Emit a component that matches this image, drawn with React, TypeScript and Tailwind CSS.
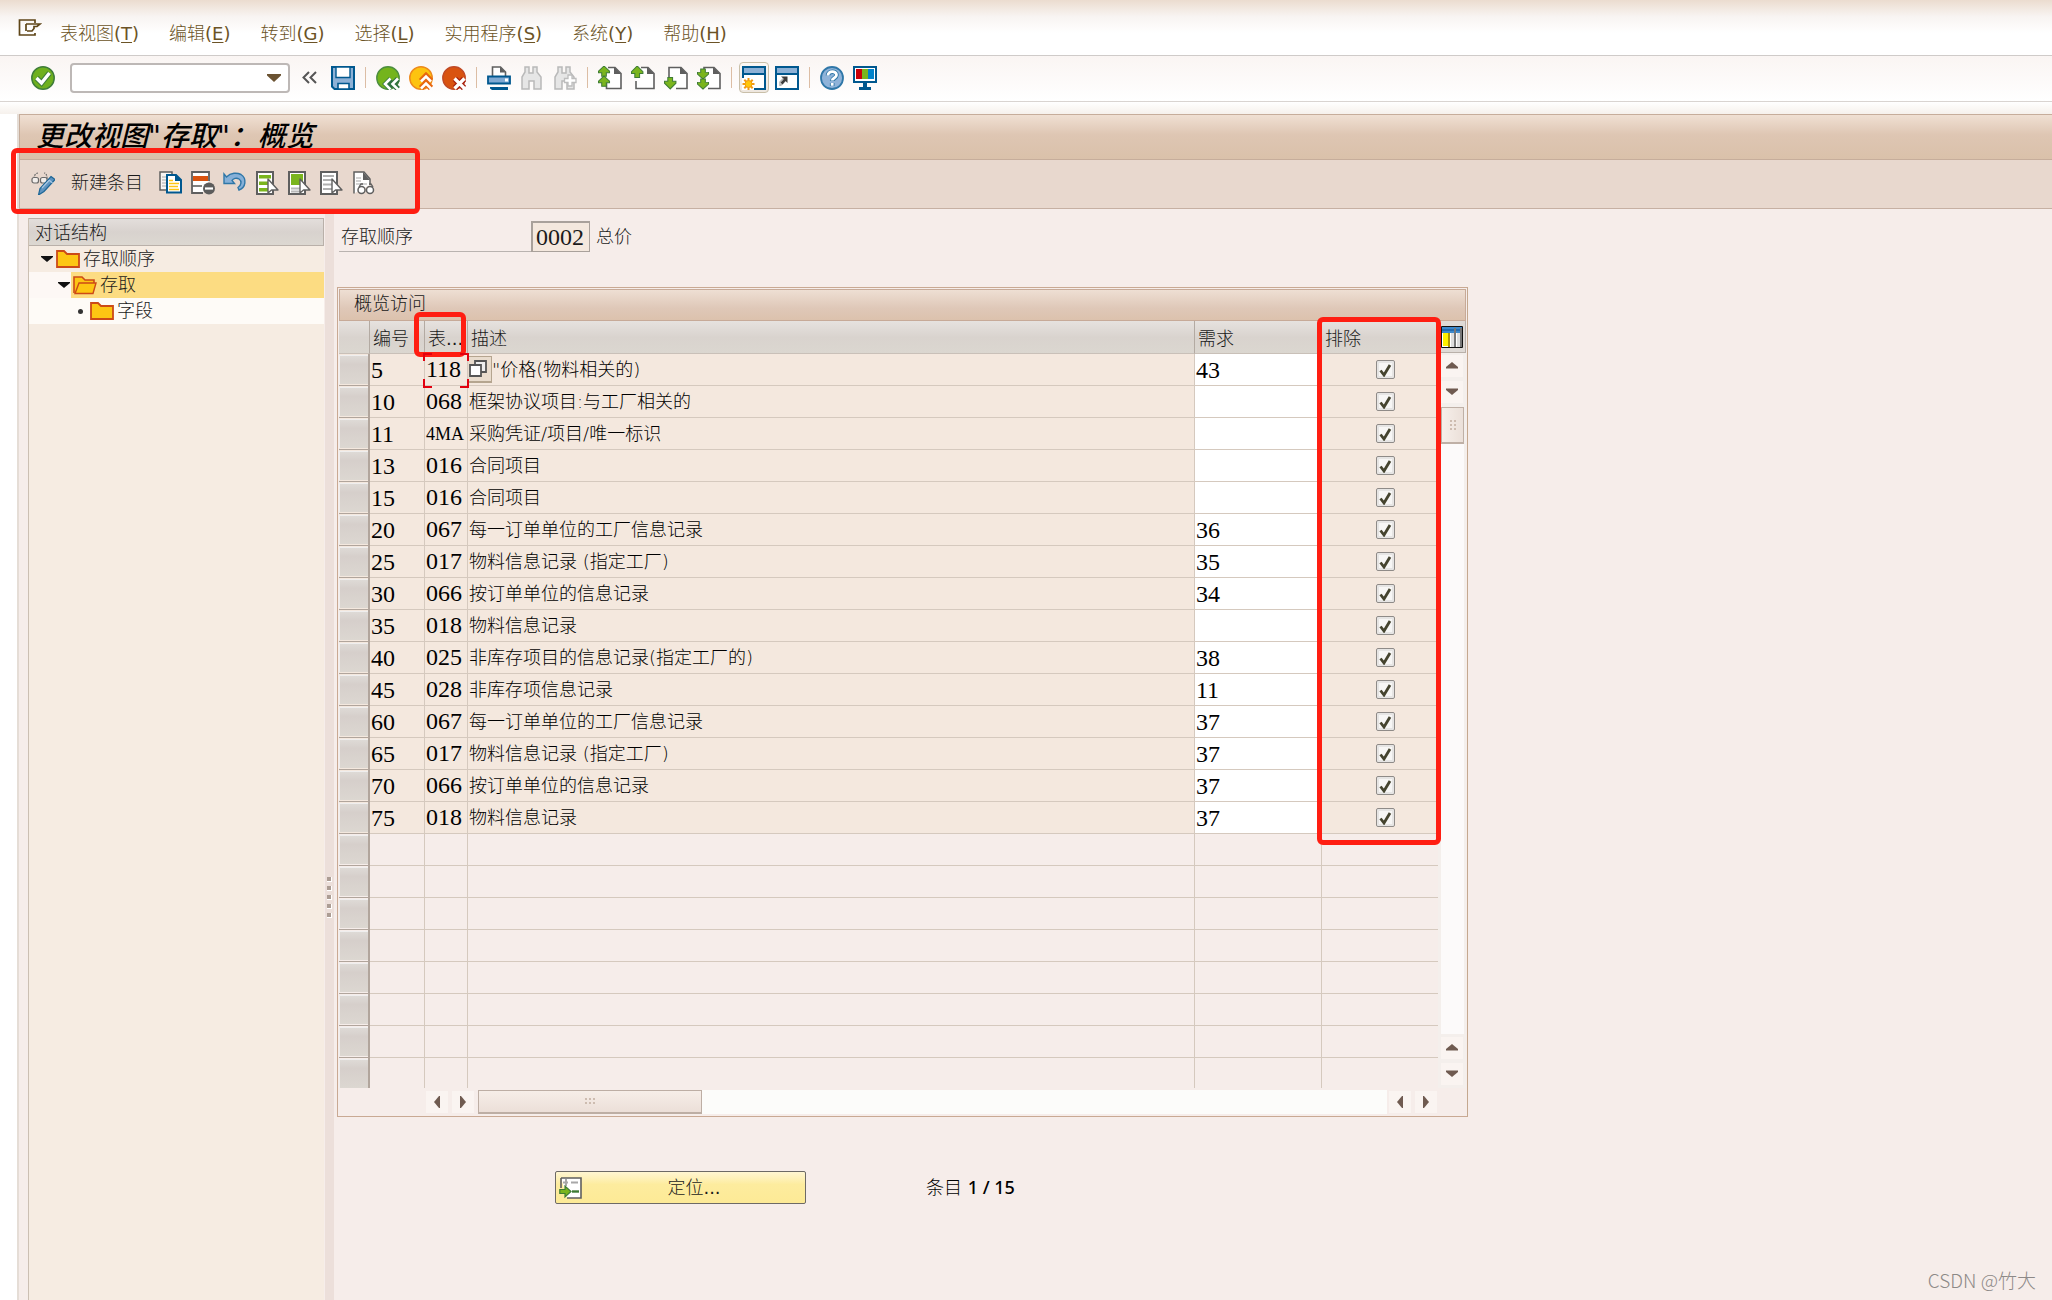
import { useState } from 'react';
import type { ReactNode } from 'react';

type Row = { no: string; table: string; text: string; req: string };

const rows: Row[] = [
  { no: '5', table: '118', text: '"价格(物料相关的)', req: '43' },
  { no: '10', table: '068', text: '框架协议项目:与工厂相关的', req: '' },
  { no: '11', table: '4MA', text: '采购凭证/项目/唯一标识', req: '' },
  { no: '13', table: '016', text: '合同项目', req: '' },
  { no: '15', table: '016', text: '合同项目', req: '' },
  { no: '20', table: '067', text: '每一订单单位的工厂信息记录', req: '36' },
  { no: '25', table: '017', text: '物料信息记录 (指定工厂)', req: '35' },
  { no: '30', table: '066', text: '按订单单位的信息记录', req: '34' },
  { no: '35', table: '018', text: '物料信息记录', req: '' },
  { no: '40', table: '025', text: '非库存项目的信息记录(指定工厂的)', req: '38' },
  { no: '45', table: '028', text: '非库存项信息记录', req: '11' },
  { no: '60', table: '067', text: '每一订单单位的工厂信息记录', req: '37' },
  { no: '65', table: '017', text: '物料信息记录 (指定工厂)', req: '37' },
  { no: '70', table: '066', text: '按订单单位的信息记录', req: '37' },
  { no: '75', table: '018', text: '物料信息记录', req: '37' },
];

const emptyRows = [0, 1, 2, 3, 4, 5, 6, 7];

const menus = [
  ['表视图', 'T'],
  ['编辑', 'E'],
  ['转到', 'G'],
  ['选择', 'L'],
  ['实用程序', 'S'],
  ['系统', 'Y'],
  ['帮助', 'H'],
];

function Icon({ children }: { children: ReactNode }) {
  return (
    <svg width="24" height="24" viewBox="0 0 24 24" className="block shrink-0" aria-hidden="true">
      {children}
    </svg>
  );
}

function IconButton({ label, children }: { label: string; children: ReactNode }) {
  return (
    <button type="button" aria-label={label} className="shrink-0">
      <Icon>{children}</Icon>
    </button>
  );
}

function Sep() {
  return <span className="flex h-[21px] w-[3px] shrink-0 justify-center"><span className="w-px bg-[#dcbda4]" /></span>;
}

/* a page with a folded corner, shared by the paging icons */
function Page() {
  return (
    <>
      <path d="M10 1.5h7l6 6v15H8.500V17" fill="#fff" stroke="#5f5f5f" strokeWidth="1.6" />
      <path d="M16 1l7 7h-7z" fill="#5f5f5f" />
    </>
  );
}

const up = 'M6 0l6 6v2H8.500v4h-5V8H0V6z';
const down = 'M6 12L0 6V4h3.500V0h5v4H12v2z';

function Arrow({ d, y, small }: { d: string; y: number; small?: boolean }) {
  return (
    <path
      d={d}
      transform={small ? `translate(.5 ${y}) scale(.92 .85)` : `translate(.5 ${y}) scale(.95)`}
      fill="#7ab51d"
      stroke="#3e7c35"
      strokeWidth="1.1"
    />
  );
}

function Binoculars() {
  return (
    <path
      d="M5 1h4v6h4V1h4v5l4 5v12h-7v-8h-5v8H2V11l3-5z"
      fill="#e6e6e6"
      stroke="#b9b9b9"
      strokeWidth="1.5"
    />
  );
}

function Cursor() {
  return <path d="M13 8v14l3.500-3h6.500z" fill="#fff" stroke="#5f5f5f" strokeWidth="1.4" strokeLinejoin="round" />;
}

function Folder({ open }: { open?: boolean }) {
  return (
    <svg width="24" height="20" viewBox="0 0 24 20" className="block shrink-0" aria-hidden="true">
      {open ? (
        <>
          <path d="M1 18V2h8l3 3h9v4" fill="#fdc613" stroke="#cc4a17" strokeWidth="1.6" />
          <path d="M2 18.500L6 8h17l-3 10.500z" fill="#fdc613" stroke="#cc4a17" strokeWidth="1.4" />
        </>
      ) : (
        <path d="M1 18V2h7l3 3h12v13z" fill="#fdc613" stroke="#cc4a17" strokeWidth="1.8" />
      )}
    </svg>
  );
}

function Caret() {
  return (
    <svg width="12" height="8" viewBox="0 0 12 8" className="block shrink-0" aria-hidden="true">
      <path d="M0 1h12v1L6 7 0 2z" fill="#111" />
    </svg>
  );
}

const arrowPaths = {
  up: 'M5 13.500v-1.500l6-5 6 5v1.500z',
  down: 'M5 7.500v1.500l6 5 6-5V7.500z',
  left: 'M14 5h-1l-5 6 5 6h1z',
  right: 'M8 5h1l5 6-5 6H8z',
};

function ScrollButton({ dir }: { dir: keyof typeof arrowPaths }) {
  return (
    <button type="button" aria-label={dir} className="size-[22px] shrink-0 bg-[#faf4f1]">
      <svg width="22" height="22" viewBox="0 0 22 22" className="block">
        <path d={arrowPaths[dir]} fill="#6f5a50" />
      </svg>
    </button>
  );
}

function Grip({ vertical }: { vertical?: boolean }) {
  return (
    <span className={vertical ? 'grid grid-cols-2 gap-[2px]' : 'grid grid-cols-3 gap-[2px]'}>
      {[0, 1, 2, 3, 4, 5].map((i) => <span key={i} className="size-[2px] bg-[#cdbcb0]" />)}
    </span>
  );
}

function Mark({ className }: { className: string }) {
  return <span className={`pointer-events-none absolute z-10 rounded-md border-[5px] border-[#ff1e12] ${className}`} />;
}

function MenuBar() {
  return (
    <nav className="flex h-14 items-center border-b border-[#cfcbc9] bg-linear-to-b from-[#ebdccf] via-[#f8f4f2] via-30% to-white to-60% pl-[18px] pt-3 text-[#6b5326]">
      <svg width="24" height="18" viewBox="0 0 24 18" className="mb-3 mr-[18px] block shrink-0" aria-hidden="true">
        <path d="M17 4V1H1.500v15H17v-2M8 5h14l-3 2.500h-3v2l-2 2.500H9M8 5v7" fill="none" stroke="#5f4618" strokeWidth="1.7" />
      </svg>
      <div className="flex gap-[30px] whitespace-nowrap">
        {menus.map(([name, key]) => (
          <button key={key} type="button">
            {name}
            <span className="font-normal">(<span className="underline underline-offset-2">{key}</span>)</span>
          </button>
        ))}
      </div>
    </nav>
  );
}

function SystemBar() {
  return (
    <div className="flex h-[46px] items-center gap-[9px] border-b border-[#d9d4d1] bg-linear-to-b from-[#faf5f3] to-white pb-[2px] pl-[31px]">
      <IconButton label="回车">
        <circle cx="12" cy="12" r="11.200" fill="#6fb01e" stroke="#3f7d3a" strokeWidth="1.500" />
        <path d="M5.500 12l5 5 8-10" fill="none" stroke="#3f7d3a" strokeWidth="5.500" />
        <path d="M5.500 12l5 5 8-10" fill="none" stroke="#fff" strokeWidth="3.400" />
      </IconButton>
      <div className="ml-[6px] flex h-[30px] w-[220px] rounded-sm border-2 border-[#bdb8b6] bg-white">
        <input aria-label="命令" className="min-w-0 flex-1 px-1 outline-none" />
        <button type="button" aria-label="历史" className="w-[21px]">
          <svg width="14" height="8" viewBox="0 0 14 8" className="block">
            <path d="M0 0h14v1.500L7 8 0 1.500z" fill="#6b5332" />
          </svg>
        </button>
      </div>
      <button type="button" aria-label="收起" className="w-[23px] shrink-0">
        <svg width="23" height="24" viewBox="0 0 23 24" className="block">
          <path d="M10 6l-5.500 5.500L10 17M17 6l-5.500 5.500L17 17" fill="none" stroke="#555" strokeWidth="2" />
        </svg>
      </button>
      <IconButton label="保存">
        <path d="M1 1h22v22H3.500L1 20.500z" fill="#8db1d6" stroke="#00588f" strokeWidth="2" />
        <path d="M5 1h14v10.500H5z" fill="#fff" stroke="#00588f" strokeWidth="1.400" />
        <path d="M7 23v-5.500h11V23z" fill="#fff" stroke="#00588f" strokeWidth="1.600" />
      </IconButton>
      <Sep />
      <IconButton label="返回">
        <circle cx="12" cy="12" r="11.200" fill="#74b41c" stroke="#4d8f3f" strokeWidth="1.400" />
        <path d="M15 13l-5 5 5 5M22 13l-5 5 5 5" fill="none" stroke="#2f7040" strokeWidth="5.500" />
        <path d="M14.500 12.500L9 18l5.500 5.500M22 12.500L16.500 18l5.500 5.500" fill="none" stroke="#fff" strokeWidth="2.600" />
      </IconButton>
      <IconButton label="退出">
        <circle cx="12" cy="12" r="11.200" fill="#fdc30f" stroke="#ee8a1c" strokeWidth="1.500" />
        <path d="M12 15l5-5 5 5M12 22l5-5 5 5" fill="none" stroke="#e8660f" strokeWidth="6" />
        <path d="M12 15.500l5-5 5 5M12 22.500l5-5 5 5" fill="none" stroke="#fff" strokeWidth="2.600" />
      </IconButton>
      <IconButton label="取消">
        <circle cx="12" cy="12" r="11.200" fill="#d95310" stroke="#c04a26" strokeWidth="1.400" />
        <path d="M13 13l9 9M22 13l-9 9" fill="none" stroke="#a8210f" strokeWidth="6" />
        <path d="M12.500 12.500l10 10M22.500 12.500l-10 10" fill="none" stroke="#fff" strokeWidth="3.200" />
      </IconButton>
      <Sep />
      <IconButton label="打印">
        <path d="M5.500 10V1h8l5 5v4" fill="#fff" stroke="#5f5f5f" strokeWidth="1.600" />
        <path d="M13 1l5.500 5.500H13z" fill="#5f5f5f" />
        <path d="M1 10.500h22v7H1z" fill="#7fa9d3" stroke="#00588f" strokeWidth="1.800" />
        <path d="M3 21h18v3H5l-2-1.500z" fill="#00588f" />
        <path d="M18 12.500h3v3h-3z" fill="#fff" />
      </IconButton>
      <IconButton label="查找"><Binoculars /></IconButton>
      <IconButton label="继续查找">
        <Binoculars />
        <path d="M15 9h4v3.500h4v4h-4V20h-4v-3.500h-3.500v-4H15z" fill="#fff" stroke="#bdbdbd" strokeWidth="1.300" />
      </IconButton>
      <Sep />
      <IconButton label="首页">
        <Page />
        <Arrow d={up} y={0} small />
        <Arrow d={up} y={10} small />
      </IconButton>
      <IconButton label="上一页">
        <path d="M10 1.500h7l6 6v15H5V15" fill="#fff" stroke="#5f5f5f" strokeWidth="1.600" />
        <path d="M16 1l7 7h-7z" fill="#5f5f5f" />
        <Arrow d={up} y={0} />
      </IconButton>
      <IconButton label="下一页">
        <path d="M5 11V1.500h12l6 6v15H12" fill="#fff" stroke="#5f5f5f" strokeWidth="1.600" />
        <path d="M16 1l7 7h-7z" fill="#5f5f5f" />
        <Arrow d={down} y={11.500} />
      </IconButton>
      <IconButton label="末页">
        <path d="M7 5V1.500h10l6 6v15H11" fill="#fff" stroke="#5f5f5f" strokeWidth="1.600" />
        <path d="M16 1l7 7h-7z" fill="#5f5f5f" />
        <Arrow d={down} y={3} small />
        <Arrow d={down} y={13} small />
      </IconButton>
      <Sep />
      <button
        type="button"
        aria-label="新建会话"
        className="-mx-[3px] flex h-[31px] w-[30px] shrink-0 items-center justify-center rounded border border-[#c9bfa9] bg-linear-to-b from-[#fbf8f5] to-[#eee7df]"
      >
        <Icon>
          <path d="M1 1h22v22H1z" fill="#fff" stroke="#00588f" strokeWidth="2" />
          <path d="M2 2h20v5H2z" fill="#8db1d6" />
          <path d="M1 8h22" stroke="#00588f" strokeWidth="2" />
          <path d="M0 12h12v12H0z" fill="#fff" />
          <path d="M6.500 12v12M.5 18h12M2.300 13.800l8.400 8.400M10.700 13.800l-8.400 8.400" stroke="#f39a12" strokeWidth="2" />
          <circle cx="6.500" cy="18" r="3.500" fill="#ffc70a" stroke="#f39a12" />
        </Icon>
      </button>
      <IconButton label="创建快捷方式">
        <path d="M1 1h22v22H1z" fill="#fff" stroke="#00588f" strokeWidth="2" />
        <path d="M2 2h20v5H2z" fill="#8db1d6" />
        <path d="M1 8h22" stroke="#00588f" strokeWidth="2" />
        <path d="M5 20v-4l3-3 2 1M5.500 19.500l5-5" fill="none" stroke="#b5b5b5" strokeWidth="1.500" />
        <path d="M6 10.500h6.500V17l-2-2-3 3.500-2-2 3.500-3.500z" fill="#3c3c3c" />
      </IconButton>
      <Sep />
      <IconButton label="帮助">
        <circle cx="12" cy="12" r="11" fill="#8fb3d9" stroke="#2f77a8" strokeWidth="1.800" />
        <path d="M8 9.500c0-5 8.500-5 8.500-.5 0 3-4.300 3-4.300 6M12.200 17v3" fill="none" stroke="#2f77a8" strokeWidth="4.600" />
        <path d="M8 9.500c0-5 8.500-5 8.500-.5 0 3-4.300 3-4.300 5.500M12.200 17v2.800" fill="none" stroke="#fff" strokeWidth="2.800" />
      </IconButton>
      <IconButton label="自定义布局">
        <path d="M1 1h22v15H1z" fill="#fff" stroke="#00588f" strokeWidth="2" />
        <path d="M3 3h6v10H3z" fill="#c8000a" />
        <path d="M9 3h6v10H9z" fill="#7ab51d" />
        <path d="M15 3h6v10h-6z" fill="#0083cb" />
        <path d="M10 17h4v4h4v3H6v-3h4z" fill="#00588f" />
      </IconButton>
    </div>
  );
}

function AppToolbar() {
  return (
    <div className="relative flex h-[49px] items-center border-b border-l border-[#c6b0a3] bg-[#e8d8ce] pb-[2px] pl-[11px]">
      <IconButton label="显示/更改">
        <path d="M3 8c0-4 2-6 4-6M16 8c0-4-1-6-3-6" fill="none" stroke="#6a6a6a" strokeWidth="1.200" strokeDasharray="2 1" />
        <rect x="1" y="6.500" width="6.500" height="5.500" rx="2" fill="#f2eeeb" stroke="#6a6a6a" strokeWidth="1.200" />
        <rect x="9.500" y="6.500" width="6.500" height="5.500" rx="2" fill="#f2eeeb" stroke="#6a6a6a" strokeWidth="1.200" />
        <path d="M20 5.500l4 3-11 12-5.500 3.500 1.500-6.500z" fill="#5e93c0" stroke="#1d6696" strokeWidth="1.200" />
        <path d="M18 9l3.500 3M11 17l7-7.500" stroke="#a9c8e2" strokeWidth="1.200" />
      </IconButton>
      <button type="button" className="mx-4 whitespace-nowrap">新建条目</button>
      <div className="flex gap-2">
        <IconButton label="复制为">
          <path d="M1 1h12v18H1z" fill="#f7f5f3" stroke="#5f5f5f" strokeWidth="1.500" />
          <path d="M3 6h5M3 9h5M3 12h5M3 15h5" stroke="#c4c4c4" strokeWidth="1.500" />
          <path d="M8 4h9l5 5v12.500H8z" fill="#fff" stroke="#00588f" strokeWidth="2" />
          <path d="M16 3l7 7h-7z" fill="#00588f" />
          <path d="M10 9.500h4M10 12.500h10M10 15.500h9M10 18.500h10" stroke="#fdc613" strokeWidth="1.600" />
        </IconButton>
        <IconButton label="删除">
          <path d="M18 10V1H1v21h11" fill="#fff" stroke="#5f5f5f" strokeWidth="1.800" />
          <path d="M2 5h15v5H2z" fill="#d95310" />
          <path d="M1 15h10" stroke="#5f5f5f" strokeWidth="1.600" />
          <circle cx="18" cy="17.500" r="6" fill="#5c5c5c" />
          <path d="M14 17.500h8" stroke="#fff" strokeWidth="2.200" />
        </IconButton>
        <IconButton label="撤销更改">
          <path d="M1 3l2.500 3C8 1.500 14 1.500 18 3.500c6 4 5 13-2 15.500l-1-2.500c3.500-2.500 4-6.500 1-8.500-2.500-1.500-6-.5-7 1.500l2.500 3H1z" fill="#86b0d8" stroke="#2f77a8" strokeWidth="1.400" />
        </IconButton>
        <IconButton label="全选">
          <path d="M2 1h16v22H2z" fill="#fff" stroke="#5f5f5f" strokeWidth="2" />
          <path d="M4 4h12v3.500H4zM4 10.500h9V14H4zM4 17h9v3.500H4z" fill="#7ab51d" />
          <Cursor />
        </IconButton>
        <IconButton label="选择块">
          <path d="M2 1h16v22H2z" fill="#fff" stroke="#5f5f5f" strokeWidth="2" />
          <path d="M4 3h12v11H4z" fill="#7ab51d" />
          <path d="M4 17.500h9M4 20.500h10" stroke="#b8b8b8" strokeWidth="2" />
          <Cursor />
        </IconButton>
        <IconButton label="取消全选">
          <path d="M2 1h16v22H2z" fill="#fff" stroke="#5f5f5f" strokeWidth="2" />
          <path d="M4 5h11M4 9h9M4 13.500h9M4 18h9" stroke="#b0b0b0" strokeWidth="2" />
          <Cursor />
        </IconButton>
        <IconButton label="打印字段列表">
          <path d="M3 22.500V1h10l6 7v6" fill="#fff" stroke="#5f5f5f" strokeWidth="1.500" />
          <path d="M12 1l7 8h-7z" fill="#5f5f5f" />
          <path d="M5 7h5M5 10h5M5 13h11" stroke="#c4c4c4" strokeWidth="1.500" />
          <circle cx="10.500" cy="19" r="3.500" fill="#fff" stroke="#5f5f5f" strokeWidth="1.500" />
          <circle cx="19" cy="19" r="3.500" fill="#fff" stroke="#5f5f5f" strokeWidth="1.500" />
          <path d="M8 16l2-3h2M22 16l-2-3h-2" fill="none" stroke="#5f5f5f" strokeWidth="1.300" />
        </IconButton>
      </div>
      <Mark className="-left-[9px] -top-3 h-[66px] w-[409px]" />
    </div>
  );
}

function Tree() {
  return (
    <aside className="ml-[9px] mr-px mt-[9px] w-[296px] shrink-0 border-l border-[#cbbfb2] bg-[#f6ece2]">
      <h2 className="h-7 border border-l-0 border-[#b9b0a9] bg-linear-to-b from-[#e3dedb] via-[#d8d2ce] to-[#dcd8d1] pl-[6px] leading-[28px]">对话结构</h2>
      <ul>
        <li className="flex h-[26px] items-center pl-3">
          <Caret />
          <span className="ml-[3px]"><Folder /></span>
          <span className="ml-[3px]">存取顺序</span>
        </li>
        <li className="flex h-[26px] items-center bg-[#fdf8f5] pl-[29px]">
          <Caret />
          <span className="ml-px flex h-full flex-1 items-center bg-[#fcdc82] pl-[2px]">
            <Folder open />
            <span className="ml-[3px]">存取</span>
          </span>
        </li>
        <li className="flex h-[26px] items-center bg-[#fefbf7] pl-[49px]">
          <span className="size-[5px] rounded-full bg-[#333]" />
          <span className="ml-[7px]"><Folder /></span>
          <span className="ml-[3px]">字段</span>
        </li>
      </ul>
    </aside>
  );
}

const th = 'relative border-b border-r border-[#c9c0b8] border-r-[#b3aaa2] pl-[3px] pt-[3px] text-left font-light';
const cell = 'border-b border-r border-[#d5c9be] p-0 pl-px';
const num = 'font-["Liberation_Serif",serif] text-2xl leading-6';

function RowSelector() {
  return (
    <td className="border-b border-r-2 border-[#b1a59c] p-0">
      <button
        type="button"
        aria-label="选择行"
        className="block h-full min-h-[29px] w-full border-l border-t border-[#efeeee] bg-linear-to-b from-[#dedad6] via-[#d6cfcb] via-30% to-[#dcd7d1]"
      />
    </td>
  );
}

function AccessTable() {
  const [excluded, setExcluded] = useState(new Set(rows.map((r) => r.no)));

  const toggle = (no: string) => {
    const next = new Set(excluded);
    if (next.has(no)) next.delete(no);
    else next.add(no);
    setExcluded(next);
  };

  return (
    <table className="min-w-0 flex-1 table-fixed border-separate border-spacing-0 whitespace-nowrap">
      <colgroup>
        <col className="w-[31px]" />
        <col className="w-[55px]" />
        <col className="w-[43px]" />
        <col />
        <col className="w-[127px]" />
        <col className="w-[116px]" />
      </colgroup>
      <thead>
        <tr className="h-[33px] bg-linear-to-b from-[#e6e2df] via-[#d9d3ce] to-[#dbd7d0]">
          <th className={th} aria-label="选择" />
          <th className={th}>编号</th>
          <th className={th}>
            表<span className="font-normal">...</span>
            <Mark className="-left-[11px] -top-[9px] h-[45px] w-[52px]" />
          </th>
          <th className={th}>描述</th>
          <th className={th}>需求</th>
          <th className={th}>
            排除
            <Mark className="-left-[5px] -top-1 h-[528px] w-[124px]" />
          </th>
        </tr>
      </thead>
      <tbody>
        {rows.map((r, i) => (
          <tr key={r.no} className="h-8 bg-[#f4e8de] text-black">
            <RowSelector />
            <td className={`${cell} ${num}`}>{r.no}</td>
            <td className={`${cell} relative`}>
              <span className={r.table === '4MA' ? 'font-["Liberation_Serif",serif] text-lg leading-6' : num}>{r.table}</span>
              {i === 0 && (
                <svg width="46" height="35" viewBox="0 0 46 35" className="absolute -left-[2px] -top-px z-10" aria-hidden="true">
                  <path d="M1 8V1h8M37 1h8v7M45 26v8h-8M9 34H1v-8" fill="none" stroke="#e2000f" strokeWidth="2" />
                </svg>
              )}
            </td>
            <td className={i === 0 ? 'border-b border-r border-[#d5c9be] p-0' : cell}>
              {i === 0 ? (
                <div className="flex items-center">
                  <button type="button" aria-label="值帮助" className="h-[27px] w-6 border-b-2 border-r border-t border-[#b5a58f] bg-[#e9dccd]">
                    <svg width="22" height="22" viewBox="0 0 22 22" className="block">
                      <path d="M7 3h11v11H7z" fill="#eee" stroke="#555" strokeWidth="1.800" />
                      <path d="M2 7h11v11H2z" fill="#fff" stroke="#555" strokeWidth="1.800" />
                    </svg>
                  </button>
                  {r.text}
                </div>
              ) : (
                r.text
              )}
            </td>
            <td className={`${cell} ${num} bg-white`}>{r.req}</td>
            <td className="border-b border-[#d5c9be] p-0 pl-[11px]">
              <label className="mx-auto grid size-[19px] place-items-center">
                <input
                  type="checkbox"
                  aria-label={`排除 ${r.no}`}
                  checked={excluded.has(r.no)}
                  onChange={() => toggle(r.no)}
                  className="peer size-[19px] appearance-none rounded-xs border border-[#8f8b88] bg-[#f7f6f5] shadow-[inset_0_0_0_2px_#e6e5e4] [grid-area:1/1]"
                />
                <svg width="13" height="14" viewBox="0 0 13 14" className="pointer-events-none z-[1] hidden peer-checked:block [grid-area:1/1]" aria-hidden="true">
                  <path d="M1.500 7.500l3.500 4.500 6-10" fill="none" stroke="#45442f" strokeWidth="2.800" />
                </svg>
              </label>
            </td>
          </tr>
        ))}
        {emptyRows.map((n) => (
          <tr key={n} className={n === 7 ? 'h-[30px] *:border-b-0' : 'h-8'}>
            <RowSelector />
            <td className={cell} />
            <td className={cell} />
            <td className={cell} />
            <td className={cell} />
            <td className="border-b border-[#d5c9be] p-0" />
          </tr>
        ))}
      </tbody>
    </table>
  );
}

function TableControl() {
  return (
    <section className="w-full max-w-[1131px] border border-[#c9a993] border-r-[#c4a88f] p-px">
      <h3 className="h-8 border border-[#c7aa98] bg-linear-to-b from-[#eedfd3] via-[#dfc8b8] via-60% to-[#dcc2ad] pl-[14px] leading-[28px]">概览访问</h3>
      <div className="flex">
        <AccessTable />
        <div className="flex w-7 shrink-0 flex-col bg-[#f4efec] pl-[3px] pr-[2px]">
          <div className="-ml-[3px] -mr-[2px] flex h-8 items-center border-b border-r border-[#b9b0a9] bg-[#dfdad6] pl-[3px]">
            <button type="button" aria-label="配置">
              <svg width="22" height="22" viewBox="0 0 22 22" className="block">
                <path d="M.5.500h21v21H.5z" fill="#fff" stroke="#111" />
                <path d="M1 1h20v6H1z" fill="#3b88cc" />
                <path d="M1 4h20" stroke="#0a4f94" />
                <path d="M2 7h5v13H2z" fill="#fff000" />
                <path d="M7 7h2v14H7z" fill="#b29a00" />
                <path d="M10 7h4v14h-4zM16 7h3v14h-3z" fill="#ddd" />
                <path d="M14 2v19M20 2v19" stroke="#777" strokeWidth="2" />
              </svg>
            </button>
          </div>
          <div className="mt-[2px] flex flex-col gap-1">
            <ScrollButton dir="up" />
            <ScrollButton dir="down" />
          </div>
          <div className="mt-1 flex-1 bg-[#fcfafa]">
            <div className="flex h-[37px] items-center justify-center border border-b-2 border-[#bfb0a6] bg-linear-to-r from-[#f6efea] to-[#ebe0d9]">
              <Grip vertical />
            </div>
          </div>
          <div className="my-[3px] flex flex-col gap-1">
            <ScrollButton dir="up" />
            <ScrollButton dir="down" />
          </div>
        </div>
      </div>
      <div className="flex h-[27px] items-center pl-[87px] pr-[29px]">
        <div className="flex gap-1">
          <ScrollButton dir="left" />
          <ScrollButton dir="right" />
        </div>
        <div className="ml-1 mr-[2px] h-6 flex-1 bg-[#fcfcfa]">
          <div className="flex h-6 w-[224px] items-center justify-center border border-b-2 border-[#bdaea4] bg-linear-to-b from-[#f6eee8] to-[#ecdfd8]">
            <Grip />
          </div>
        </div>
        <div className="flex gap-1">
          <ScrollButton dir="left" />
          <ScrollButton dir="right" />
        </div>
      </div>
    </section>
  );
}

export default function App() {
  return (
    <div className='relative flex min-h-screen flex-col overflow-hidden bg-white font-["DejaVu_Sans","Noto_Sans_CJK_SC",sans-serif] text-lg font-light leading-6 text-[#1a1a1a]'>
      <MenuBar />
      <SystemBar />
      <div className="h-3 bg-linear-to-b from-white to-[#f6f1ec]" />
      <div className="flex flex-1 pl-[17px]">
        <div className="flex min-w-0 flex-1 flex-col border-l-2 border-[#e5ddd6] bg-[#f6edea]">
          <header className="flex h-[46px] items-center border border-r-0 border-[#c6ad9b] bg-linear-to-b from-[#f0e0d3] via-[#dec6b3] via-45% to-[#dac1aa] pl-4">
            <h1 className="whitespace-nowrap text-[28px] font-medium italic leading-8 text-black">更改视图"存取"：概览</h1>
          </header>
          <AppToolbar />
          <div className="flex flex-1">
            <Tree />
            <div className="flex w-[9px] shrink-0 flex-col items-center gap-1 bg-[#ecdfda] pt-[668px]">
              {[0, 1, 2, 3, 4].map((i) => <span key={i} className="size-[5px] border-b border-r border-white bg-[#ac9d94]" />)}
            </div>
            <main className="min-w-0 flex-1 px-[3px] pt-3">
              <div className="ml-[2px] flex h-[31px]">
                <label htmlFor="seq" className="w-48 border-b border-[#b9b3b0] pl-[2px] leading-[32px]">存取顺序</label>
                <input
                  id="seq"
                  readOnly
                  defaultValue="0002"
                  className='w-[59px] border-2 border-b border-r border-[#a9a19b] bg-[#f4e8de] pl-[3px] font-["Liberation_Serif",serif] text-2xl leading-6 outline-none'
                />
                <span className="ml-[6px] leading-[32px]">总价</span>
              </div>
              <div className="mt-[35px]">
                <TableControl />
              </div>
              <div className="mt-[54px] flex items-center pl-[218px]">
                <button
                  type="button"
                  className="flex h-[33px] w-[251px] items-center rounded-xs border border-[#6d6a66] bg-linear-to-b from-[#fff6d2] via-[#fdec9e] via-40% to-[#fdea96] pl-[3px]"
                >
                  <Icon>
                    <path d="M2 2h20v20H8" fill="#fff" stroke="#5f5f5f" strokeWidth="1.600" />
                    <path d="M2 2v10" stroke="#5f5f5f" strokeWidth="1.600" />
                    <path d="M12 6.500h7M4 6.500h5M7 3v7" stroke="#a8a8a8" strokeWidth="2" />
                    <path d="M13 15.500h7" stroke="#3e7c35" strokeWidth="2.400" />
                    <path d="M.8 13.500H6V10l6 5.500L6 21v-3.500H.8z" fill="#7ab51d" stroke="#3e7c35" strokeWidth="1.200" />
                  </Icon>
                  <span className="flex-1">定位<span className="font-normal">...</span></span>
                </button>
                <p className="ml-[120px] text-black">
                  条目 <span className='font-["Noto_Sans",sans-serif] font-medium'>1 / 15</span>
                </p>
              </div>
            </main>
          </div>
        </div>
      </div>
      <span className='absolute bottom-2 right-4 font-["Noto_Sans_CJK_SC",sans-serif] text-[19px] text-[#8d8987]'>CSDN @竹大</span>
    </div>
  );
}
